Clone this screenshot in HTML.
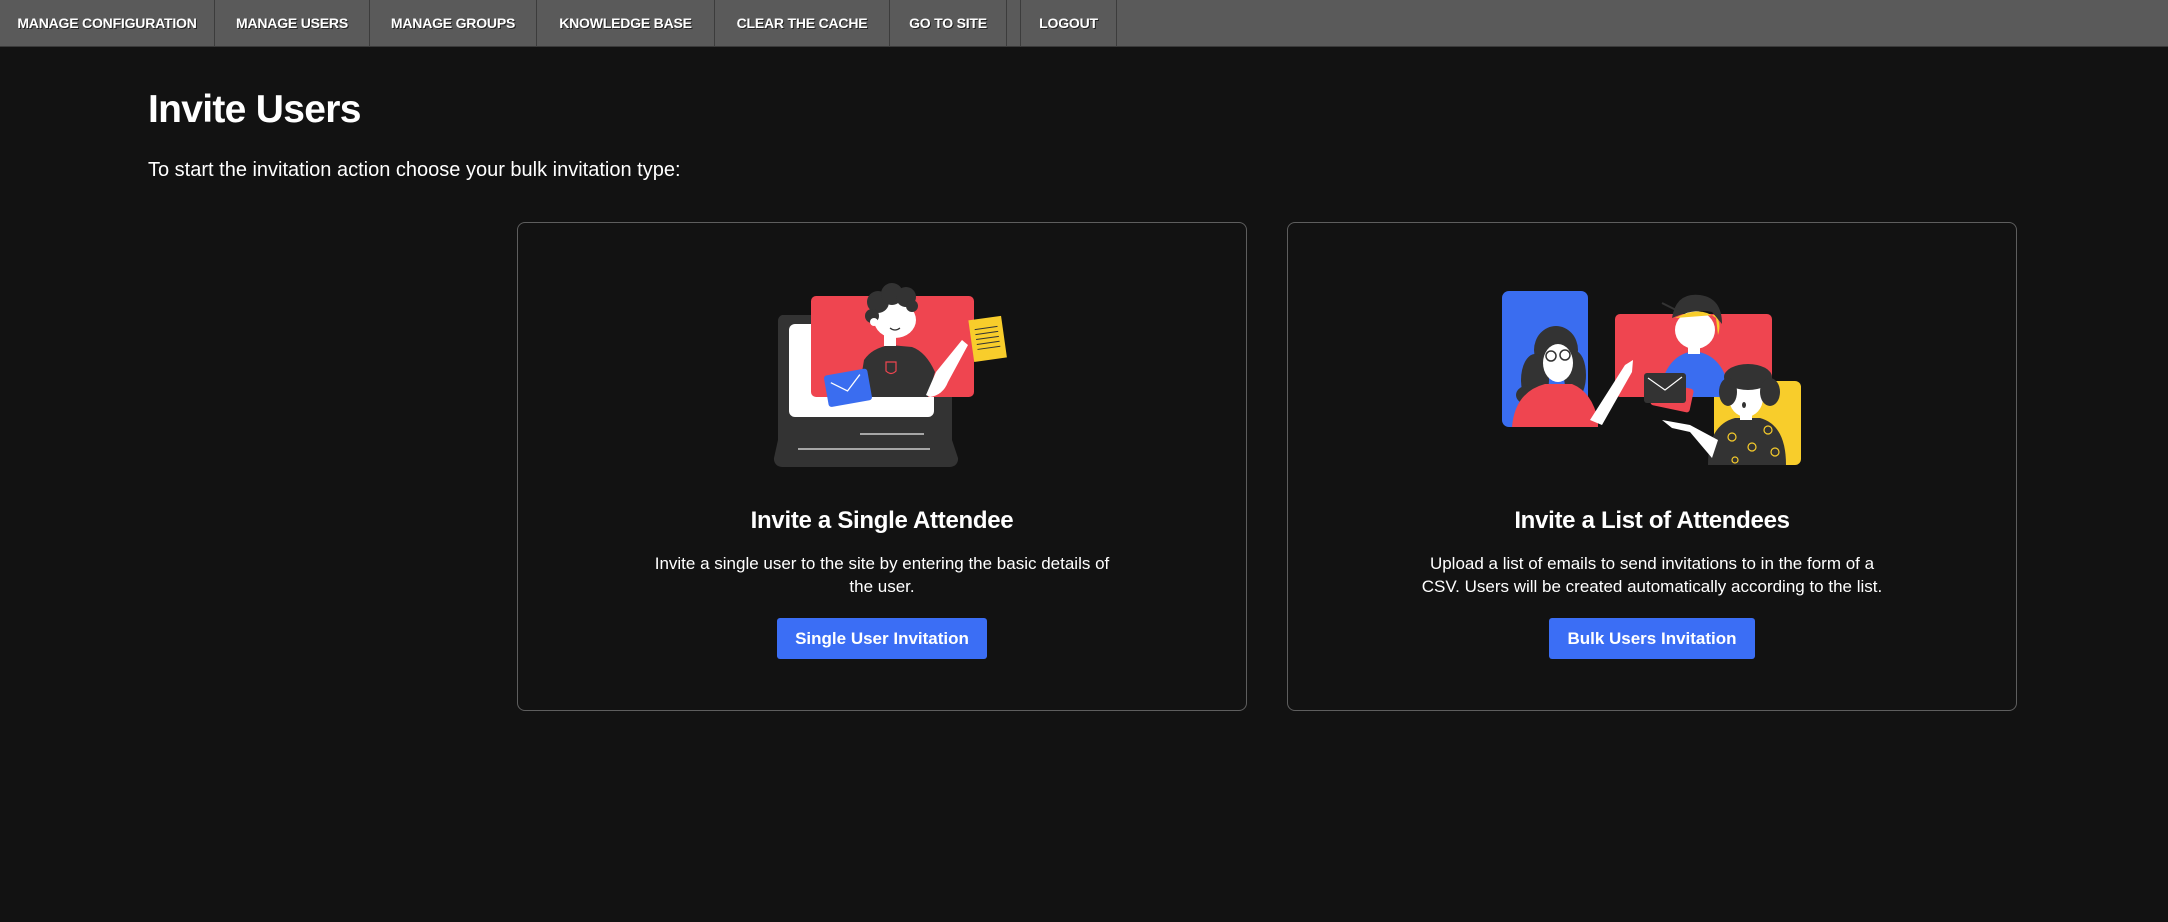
<!DOCTYPE html>
<html><head><meta charset="utf-8">
<style>
*{margin:0;padding:0;box-sizing:border-box}
html,body{width:2168px;height:922px;background:#121212;overflow:hidden;font-family:"Liberation Sans",Arial,sans-serif;color:#fff}
.nav{position:absolute;left:0;top:0;width:2168px;height:47px;background:#5a5a5a;border-bottom:1px solid #3a3a3a}
.nav span{position:absolute;top:0;height:47px;line-height:47px;font-size:14px;font-weight:bold;color:#fff;text-shadow:1px 1px 0 #222;text-align:center;white-space:nowrap;letter-spacing:-0.2px}
.sep{position:absolute;top:0;width:1px;height:47px;background:#3c3c3c}
h1{position:absolute;left:148px;top:88px;font-size:39px;font-weight:bold;letter-spacing:-0.7px}
.sub{position:absolute;left:148px;top:159px;font-size:20px}
.card{position:absolute;top:222px;width:730px;height:489px;border:1px solid #5e5e5e;border-radius:8px}
.t{position:absolute;top:507px;width:730px;text-align:center;font-size:24px;font-weight:bold;letter-spacing:-0.3px}
.d{position:absolute;top:552px;width:730px;text-align:center;font-size:17px;line-height:23px}
.b{position:absolute;top:618px;height:41px;line-height:41px;background:#3b6ef5;border-radius:3px;text-align:center;font-size:17px;font-weight:bold;color:#fff}
svg{position:absolute;left:0;top:0}
</style></head><body>
<div class="nav">
<span style="left:0;width:214px">MANAGE CONFIGURATION</span><div class="sep" style="left:214px"></div>
<span style="left:215px;width:154px">MANAGE USERS</span><div class="sep" style="left:369px"></div>
<span style="left:370px;width:166px">MANAGE GROUPS</span><div class="sep" style="left:536px"></div>
<span style="left:537px;width:177px">KNOWLEDGE BASE</span><div class="sep" style="left:714px"></div>
<span style="left:715px;width:174px">CLEAR THE CACHE</span><div class="sep" style="left:889px"></div>
<span style="left:890px;width:116px">GO TO SITE</span><div class="sep" style="left:1006px"></div><div class="sep" style="left:1020px"></div>
<span style="left:1021px;width:95px">LOGOUT</span><div class="sep" style="left:1116px"></div>
</div>
<h1>Invite Users</h1>
<div class="sub">To start the invitation action choose your bulk invitation type:</div>

<div class="card" style="left:517px"></div>
<div class="card" style="left:1287px"></div>

<div class="t" style="left:517px">Invite a Single Attendee</div>
<div class="d" style="left:517px">Invite a single user to the site by entering the basic details of<br>the user.</div>
<div class="b" style="left:777px;width:210px">Single User Invitation</div>

<div class="t" style="left:1287px">Invite a List of Attendees</div>
<div class="d" style="left:1287px">Upload a list of emails to send invitations to in the form of a<br>CSV. Users will be created automatically according to the list.</div>
<div class="b" style="left:1549px;width:206px">Bulk Users Invitation</div>

<svg width="2168" height="922" viewBox="0 0 2168 922">
<path d="M782 315 H946 a6 6 0 0 1 6 6 V440 L958 458 a8 8 0 0 1 -8 9 H782 a8 8 0 0 1 -8 -9 L778 440 V321 a6 6 0 0 1 4 -6Z" fill="#333"/>
<rect x="789" y="324" width="145" height="93" rx="6" fill="#fff"/>
<line x1="860" y1="434" x2="924" y2="434" stroke="#ccc" stroke-width="1.5"/>
<line x1="798" y1="449" x2="930" y2="449" stroke="#ccc" stroke-width="1.5"/>
<rect x="811" y="296" width="163" height="101" rx="5" fill="#ef4550"/>
<path d="M858 397 L864 360 Q872 348 890 345 L912 347 Q926 352 935 372 L928 397Z" fill="#333"/>
<path d="M886 362 h10 v9 q-5 5 -10 0z" fill="none" stroke="#ef4550" stroke-width="1.2"/>
<path d="M926 395 L936 372 L962 340 L968 345 L948 382 Q943 395 930 397Z" fill="#fff"/>
<rect x="884" y="330" width="12" height="16" fill="#fff"/>
<ellipse cx="895" cy="320" rx="21" ry="18" fill="#fff"/>
<g fill="#333"><circle cx="878" cy="302" r="11"/><circle cx="892" cy="294" r="11"/><circle cx="906" cy="297" r="10"/><circle cx="912" cy="306" r="6"/><circle cx="872" cy="316" r="7"/></g>
<circle cx="874" cy="322" r="4" fill="#fff"/>
<path d="M890 328 q5 4 10 0" stroke="#333" stroke-width="1.2" fill="none"/>
<g transform="rotate(-8 987 338)"><rect x="971" y="318" width="33" height="42" fill="#f8cd2b"/>
<g stroke="#333" stroke-width="1"><line x1="976" y1="328" x2="999" y2="328"/><line x1="976" y1="333" x2="999" y2="333"/><line x1="976" y1="338" x2="999" y2="338"/><line x1="976" y1="343" x2="999" y2="343"/><line x1="976" y1="348" x2="999" y2="348"/></g></g>
<g transform="rotate(-10 847 388)"><rect x="826" y="372" width="44" height="32" rx="3" fill="#3a6df0"/><path d="M832 380 l15 11 l15 -14" stroke="#fff" stroke-width="1.3" fill="none"/></g>

<rect x="1502" y="291" width="86" height="136" rx="7" fill="#3a6df0"/>
<rect x="1615" y="314" width="157" height="83" rx="5" fill="#ef4550"/>
<rect x="1714" y="381" width="87" height="84" rx="6" fill="#f8cd2b"/>
<g fill="#333"><ellipse cx="1556" cy="350" rx="22" ry="24"/><ellipse cx="1535" cy="380" rx="14" ry="26"/><ellipse cx="1575" cy="375" rx="11" ry="24"/><ellipse cx="1530" cy="395" rx="14" ry="10"/></g>
<ellipse cx="1558" cy="363" rx="15" ry="19" fill="#fff"/>
<circle cx="1551" cy="356" r="5" fill="none" stroke="#333" stroke-width="1.5"/><circle cx="1565" cy="355" r="5" fill="none" stroke="#333" stroke-width="1.5"/>
<path d="M1512 427 Q1515 392 1545 384 L1572 384 Q1592 392 1598 420 L1598 427Z" fill="#ef4550"/>
<path d="M1590 420 L1625 365 L1633 360 L1632 372 L1602 425Z" fill="#fff"/>
<path d="M1659 397 Q1664 355 1694 351 Q1726 355 1730 397Z" fill="#3a6df0"/>
<rect x="1688" y="340" width="12" height="14" fill="#fff"/>
<ellipse cx="1695" cy="330" rx="20" ry="19" fill="#fff"/>
<path d="M1675 318 Q1700 305 1716 318 L1718 335 Q1722 322 1715 315Z" fill="#f8cd2b"/>
<path d="M1672 318 Q1676 292 1700 295 Q1722 298 1722 324 L1712 312 Q1695 308 1672 318Z" fill="#333"/>
<line x1="1662" y1="303" x2="1680" y2="312" stroke="#333" stroke-width="2"/>
<rect x="1652" y="385" width="40" height="24" rx="3" fill="#ef4550" transform="rotate(12 1672 397)"/>
<rect x="1644" y="373" width="42" height="30" rx="3" fill="#333"/>
<path d="M1648 378 l17 12 l17 -13" stroke="#fff" stroke-width="1.2" fill="none"/>
<path d="M1708 465 Q1708 425 1735 418 L1760 418 Q1786 425 1786 465Z" fill="#333"/>
<g fill="none" stroke="#f8cd2b" stroke-width="1.2"><circle cx="1732" cy="437" r="4"/><circle cx="1752" cy="447" r="4"/><circle cx="1775" cy="452" r="4"/><circle cx="1768" cy="430" r="4"/><circle cx="1735" cy="460" r="3"/></g>
<path d="M1718 440 L1690 425 L1662 420 L1672 428 L1690 432 L1712 458Z" fill="#fff"/>
<rect x="1740" y="405" width="12" height="15" fill="#fff"/>
<ellipse cx="1746" cy="398" rx="17" ry="19" fill="#fff"/>
<g fill="#333"><ellipse cx="1748" cy="377" rx="24" ry="13"/><ellipse cx="1728" cy="392" rx="9" ry="14"/><ellipse cx="1770" cy="392" rx="10" ry="14"/></g>
<ellipse cx="1744" cy="405" rx="2" ry="3" fill="#333"/>
</svg>
</body></html>
